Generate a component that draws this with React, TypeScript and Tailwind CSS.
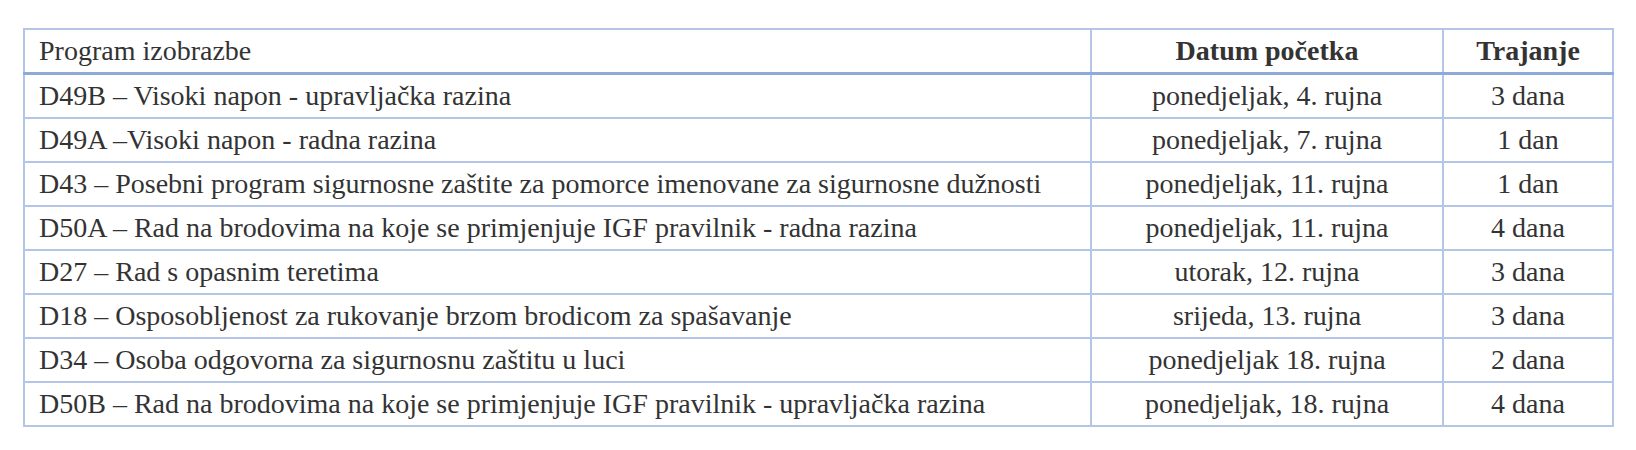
const rows = [
  ['D49B – Visoki napon - upravljačka razina', 'ponedjeljak, 4. rujna', '3 dana'],
  ['D49A –Visoki napon - radna razina', 'ponedjeljak, 7. rujna', '1 dan'],
  ['D43 – Posebni program sigurnosne zaštite za pomorce imenovane za sigurnosne dužnosti', 'ponedjeljak, 11. rujna', '1 dan'],
  ['D50A – Rad na brodovima na koje se primjenjuje IGF pravilnik - radna razina', 'ponedjeljak, 11. rujna', '4 dana'],
  ['D27 – Rad s opasnim teretima', 'utorak, 12. rujna', '3 dana'],
  ['D18 – Osposobljenost za rukovanje brzom brodicom za spašavanje', 'srijeda, 13. rujna', '3 dana'],
  ['D34 – Osoba odgovorna za sigurnosnu zaštitu u luci', 'ponedjeljak 18. rujna', '2 dana'],
  ['D50B – Rad na brodovima na koje se primjenjuje IGF pravilnik - upravljačka razina', 'ponedjeljak, 18. rujna', '4 dana'],
]

const App = () => {
  return (
    <div className="min-h-[450px] bg-white pt-[28px] pl-[23px] font-['Liberation_Serif',serif] text-[28px] leading-[32px] text-[#333]">
      <table className="w-[1591px] table-fixed border-collapse">
        <colgroup>
          <col className="w-[1067px]" />
          <col className="w-[352px]" />
          <col />
        </colgroup>
        <thead>
          <tr className="border-b-[3px] border-[#8eaadb]">
            <th className="border-2 border-b-[3px] border-[#b4c6e7] border-b-[#8eaadb] px-[14px] py-[5px] text-left font-normal">
              Program izobrazbe
            </th>
            <th className="border-2 border-b-[3px] border-[#b4c6e7] border-b-[#8eaadb] px-[14px] py-[5px] text-center font-bold">
              Datum početka
            </th>
            <th className="border-2 border-b-[3px] border-[#b4c6e7] border-b-[#8eaadb] px-[14px] py-[5px] text-center font-bold">
              Trajanje
            </th>
          </tr>
        </thead>
        <tbody>
          {rows.map((r, i) => (
            <tr key={i}>
              <td className="border-2 border-[#b4c6e7] px-[14px] py-[5px] whitespace-nowrap">{r[0]}</td>
              <td className="border-2 border-[#b4c6e7] px-[14px] py-[5px] text-center">{r[1]}</td>
              <td className="border-2 border-[#b4c6e7] px-[14px] py-[5px] text-center">{r[2]}</td>
            </tr>
          ))}
        </tbody>
      </table>
    </div>
  )
}

export default App
